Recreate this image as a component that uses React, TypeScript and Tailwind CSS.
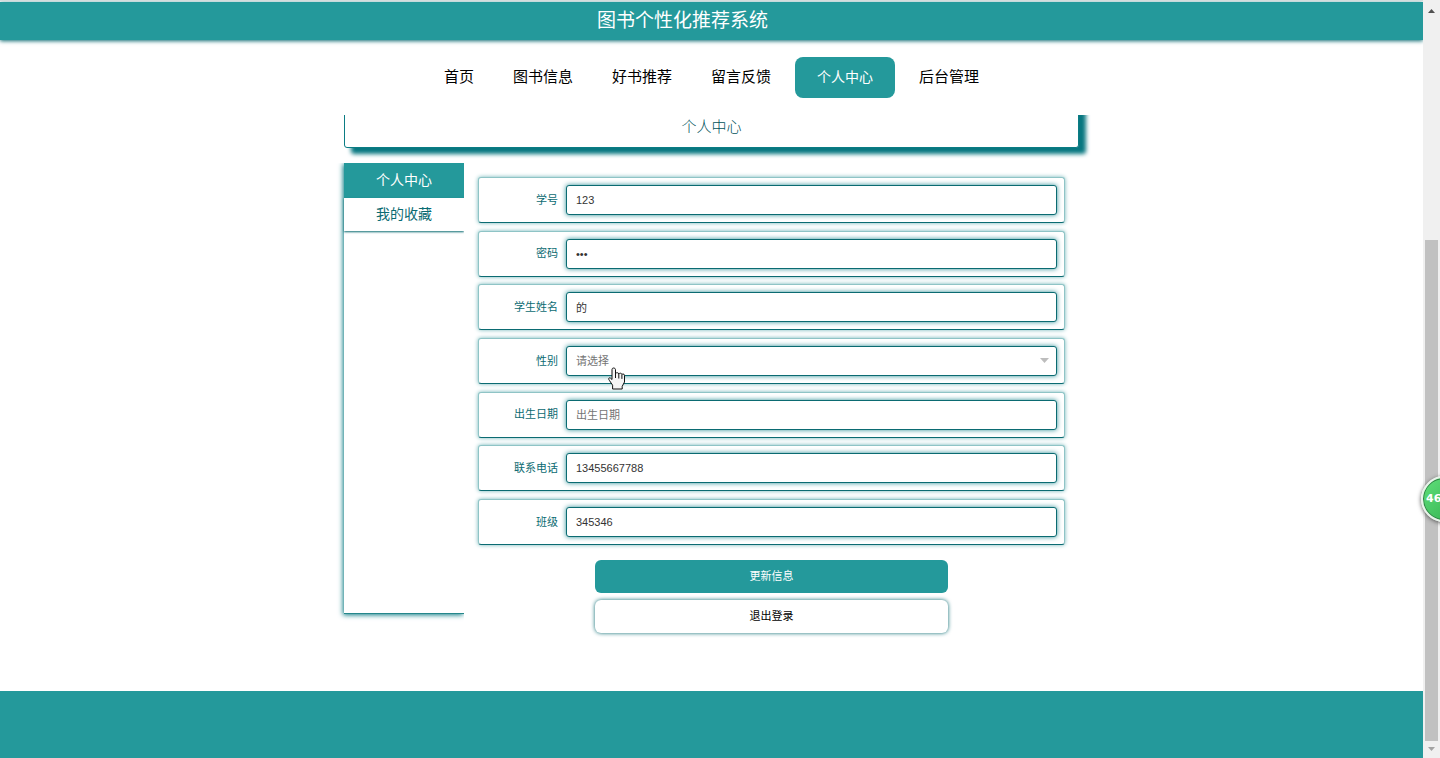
import { useState } from 'react';
import clsx from 'clsx';

const navItems = ['首页', '图书信息', '好书推荐', '留言反馈', '个人中心', '后台管理'];
const sideItems = ['个人中心', '我的收藏'];

interface Field {
  id: string;
  label: string;
  type: 'text' | 'password' | 'select';
  value: string;
  placeholder?: string;
}

const fields: Field[] = [
  { id: 'xuehao', label: '学号', type: 'text', value: '123' },
  { id: 'mima', label: '密码', type: 'password', value: '123' },
  { id: 'xingming', label: '学生姓名', type: 'text', value: '的' },
  { id: 'xingbie', label: '性别', type: 'select', value: '' },
  { id: 'riqi', label: '出生日期', type: 'text', value: '', placeholder: '出生日期' },
  { id: 'dianhua', label: '联系电话', type: 'text', value: '13455667788' },
  { id: 'banji', label: '班级', type: 'text', value: '345346' },
];

const controlClass =
  'block w-full h-[30px] px-[9px] rounded-[3px] border border-[#0b6b72] bg-white text-[11px] outline-none shadow-[0_0_5px_#2b8f96] placeholder:text-[#757575]';

function HandCursor() {
  return (
    <svg className="absolute left-[42px] top-[21px] w-[18px] h-[23px] pointer-events-none" viewBox="0 0 18 23">
      <path
        d="M5.500 1C4.600 1 4 1.700 4 2.600V12.500L2.600 11.200C1.900 10.600 1.100 10.700.8 11.300.5 11.900.8 12.600 1.300 13.300L4.600 18.200V22H14.200V19.300L16.500 15V8.400C16.500 7.500 15.900 7 15.100 7 14.600 7 14.200 7.200 13.900 7.600 13.800 6.700 13.200 6.200 12.400 6.200 11.700 6.200 11.200 6.500 10.900 7 10.700 6.200 10 5.700 9.300 5.700 8.700 5.700 8 5.900 7.500 6.400V2.600C7.500 1.600 6.600 1 5.500 1Z"
        fill="#f5f5f5"
        stroke="#111"
        strokeLinejoin="round"
      />
      <path d="M7.500 6v5M10.800 7v4.500M13.900 7.700v4.200" stroke="#111" fill="none" />
    </svg>
  );
}

function Header() {
  return (
    <header className="relative z-20 mt-px h-[38px] pr-[58px] flex items-center justify-center bg-[#24999b] shadow-[0_1px_4px_#0b6b72]">
      <h1 className="text-[19px] text-white">图书个性化推荐系统</h1>
    </header>
  );
}

function Nav() {
  return (
    <nav className="relative z-10 h-[75px] flex items-center justify-center gap-px bg-white text-[15px] leading-5 text-black">
      {navItems.map((item) =>
        item === '个人中心' ? (
          <a key={item} href="#" className="mx-1 h-[41px] px-[22px] pb-[2px] flex items-center rounded-lg bg-[#24999b] text-sm text-white">
            {item}
          </a>
        ) : (
          <a key={item} href="#" className="px-[19px] pb-[2px]">
            {item}
          </a>
        )
      )}
    </nav>
  );
}

function Sidebar() {
  return (
    <aside className="w-[120px] h-[451px] border-b border-[#24878b] text-sm text-center shadow-[-1px_1px_5px_#0b7c84] [clip-path:inset(0_0_-10px_-10px)]">
      {sideItems.map((item, i) => (
        <a
          key={item}
          href="#"
          className={clsx(
            'pb-px flex items-center justify-center',
            i === 0 ? 'h-[35px] bg-[#24999b] text-white' : 'h-[33px] text-[#0b6b72] shadow-[0_1px_2px_#0b6b72]'
          )}
        >
          {item}
        </a>
      ))}
    </aside>
  );
}

function FieldRow({ field }: { field: Field }) {
  const [value, setValue] = useState(field.value);

  return (
    <div className="h-[46px] pr-[7px] flex items-center rounded-[3px] border border-[#8fc4c6] border-b-[#0b6b72] bg-white shadow-[0_0_4px_#6fb5b9]">
      <label htmlFor={field.id} className="w-[79px] mr-2 text-right text-[11px] text-[#0b6b72]">
        {field.label}
      </label>
      <div className="relative flex-1">
        {field.type === 'select' ? (
          <>
            <select
              id={field.id}
              value={value}
              onChange={(e) => setValue(e.target.value)}
              className={clsx(controlClass, 'appearance-none text-[#757575]')}
            >
              <option value="">请选择</option>
              <option value="男">男</option>
              <option value="女">女</option>
            </select>
            <svg className="absolute right-2 top-[12px] w-[9px] h-[5px] pointer-events-none" viewBox="0 0 9 5">
              <path d="M0 0h9L4.500 5z" fill="#bdbdbd" />
            </svg>
            <HandCursor />
          </>
        ) : (
          <input
            id={field.id}
            type={field.type}
            value={value}
            placeholder={field.placeholder}
            onChange={(e) => setValue(e.target.value)}
            className={clsx(controlClass, 'text-[#333]')}
          />
        )}
      </div>
    </div>
  );
}

function ProfileForm() {
  return (
    <form className="flex-1 mx-[14px] mt-[14px]" onSubmit={(e) => e.preventDefault()}>
      <div className="h-[368px] flex flex-col justify-between">
        {fields.map((field) => (
          <FieldRow key={field.id} field={field} />
        ))}
      </div>
      <div className="mt-[15px] flex flex-col items-center gap-[7px] text-[11px]">
        <button type="submit" className="w-3/5 h-[33px] rounded-md bg-[#24999b] text-white">
          更新信息
        </button>
        <button type="button" className="w-3/5 h-[33px] rounded-md bg-white text-black shadow-[0_0_4px_#0b6b72]">
          退出登录
        </button>
      </div>
    </form>
  );
}

function ScrollTrack() {
  return (
    <div className="w-[17px] flex flex-col items-center bg-[#f0f0f0]">
      <svg className="mt-[9px] w-[7px] h-1" viewBox="0 0 7 4">
        <path d="M0 4h7L3.500 0z" fill="#505050" />
      </svg>
      <div className="flex-[227]" />
      <div className="flex-[501] w-[13px] bg-[#c1c1c1]" />
      <svg className="mt-[6px] mb-[7px] w-[7px] h-1" viewBox="0 0 7 4">
        <path d="M0 0h7L3.500 4z" fill="#a3a3a3" />
      </svg>
    </div>
  );
}

export default function App() {
  return (
    <div className="relative min-h-screen flex overflow-hidden bg-white font-['Liberation_Sans','Noto_Sans_CJK_SC',sans-serif]">
      <div className="flex-1 flex flex-col overflow-hidden border-t border-[#d4dcdc]">
        <Header />
        <Nav />

        <main className="w-full max-w-[735px] mx-auto pb-[58px]">
          {/* Page title, its top edge is scrolled under the nav */}
          <div className="-mt-5 pt-3 h-[53px] flex items-center justify-center rounded-[3px] border border-[#0b7c84] bg-white shadow-[7px_6px_4px_#077780]">
            <h2 className="text-[15px] font-light text-[#00525a]">个人中心</h2>
          </div>
          <div className="mt-[15px] flex items-start">
            <Sidebar />
            <ProfileForm />
          </div>
        </main>

        <footer className="flex-1 bg-[#24999b]" />
      </div>

      <ScrollTrack />

      {/* Floating speed ball */}
      <div className="absolute -right-[27px] top-[476px] w-[46px] h-[46px] pl-[3px] flex items-center rounded-full border-2 border-[#e8f3ea] bg-linear-to-br from-[#5fe07a] to-[#2fae4e] font-['DejaVu_Sans'] text-[11px] font-bold text-white shadow-[0_1px_4px_#555] inset-ring inset-ring-[#2f7f45]">
        46
      </div>
    </div>
  );
}
